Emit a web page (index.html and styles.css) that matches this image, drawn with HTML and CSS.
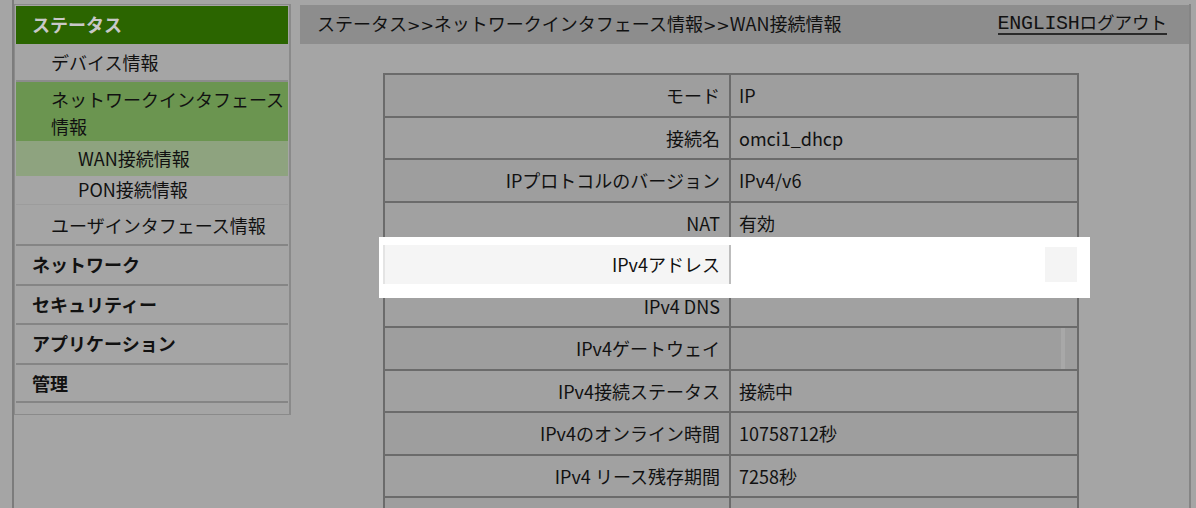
FILE: index.html
```html
<!DOCTYPE html>
<html lang="ja">
<head>
<meta charset="utf-8">
<title>WAN接続情報</title>
<link rel="stylesheet" href="styles.css">
</head>
<body>
<div class="frame">
  <aside class="sidebar">
    <div class="side-head">ステータス</div>
    <div class="side-item sub">デバイス情報</div>
    <div class="side-item sub active">ネットワークインタフェース情報</div>
    <div class="side-item subsub current">WAN接続情報</div>
    <div class="side-item subsub plain">PON接続情報</div>
    <div class="side-item sub sep">ユーザインタフェース情報</div>
    <div class="side-item top">ネットワーク</div>
    <div class="side-item top">セキュリティー</div>
    <div class="side-item top">アプリケーション</div>
    <div class="side-item top">管理</div>
    <div class="side-foot"></div>
  </aside>
  <main class="main">
    <div class="topbar">
      <div class="crumb">ステータス<span class="gt">&gt;&gt;</span>ネットワークインタフェース情報<span class="gt">&gt;&gt;</span>WAN接続情報</div>
      <div class="links"><a class="en">ENGLISH</a><a class="logout">ログアウト</a></div>
    </div>
    <div class="info">
      <div class="row"><div class="label">モード</div><div class="value">IP</div></div>
      <div class="row"><div class="label">接続名</div><div class="value">omci1_dhcp</div></div>
      <div class="row"><div class="label">IPプロトコルのバージョン</div><div class="value">IPv4/v6</div></div>
      <div class="row"><div class="label">NAT</div><div class="value">有効</div></div>
      <div class="row hl"><div class="label">IPv4アドレス</div><div class="value"><span class="tail"></span></div></div>
      <div class="row"><div class="label">IPv4 DNS</div><div class="value"></div></div>
      <div class="row"><div class="label">IPv4ゲートウェイ</div><div class="value"><span class="tail2"></span></div></div>
      <div class="row"><div class="label">IPv4接続ステータス</div><div class="value">接続中</div></div>
      <div class="row"><div class="label">IPv4のオンライン時間</div><div class="value">10758712秒</div></div>
      <div class="row"><div class="label">IPv4 リース残存期間</div><div class="value">7258秒</div></div>
      <div class="row last"><div class="label"></div><div class="value"></div></div>
    </div>
  </main>
</div>
</body>
</html>
```

FILE: styles.css
```css
html, body {
  margin: 0;
  padding: 0;
  background: #a5a5a5;
  height: 100%;
  overflow: hidden;
}
body {
  font-family: "Noto Sans CJK JP", "Noto Sans", sans-serif;
  color: #111;
  font-size: 18px;
}
.frame {
  display: flex;
  align-items: flex-start;
  margin-left: 12px;
  padding-top: 4px;
  border-left: 2px solid #7c7c7c;
  height: 504px;
  overflow: hidden;
}
.sidebar {
  width: 277px;
  box-sizing: border-box;
  border: 1px solid #8a8a8a;
  border-right-width: 2px;
  padding: 1px 1px 0 1px;
}
.side-head {
  height: 38px;
  line-height: 37px;
  background: #2b6500;
  color: #c8c8c8;
  font-weight: bold;
  padding-left: 16px;
}
.side-item {
  line-height: 27px;
  box-sizing: border-box;
}
.side-item.sub {
  padding: 5px 0 6px 35px;
  border-bottom: 2px solid #8c8c8c;
  height: 38px;
}
.side-item.active {
  background: #6b9550;
  height: 59px;
  padding-top: 4px;
  border-bottom: none;
}
.side-item.subsub {
  padding-left: 62px;
  height: 35px;
  padding-top: 4px;
}
.side-item.current {
  background: #8ea37f;
}
.side-item.plain {
  height: 29px;
  padding-top: 0;
  border-bottom: 1px solid #9c9c9c;
}
.side-item.sep {
  height: 41px;
  padding-top: 7px;
  border-bottom: 2px solid #858585;
}
.side-item.top {
  font-weight: bold;
  padding: 5px 0 0 16px;
  height: 40px;
  border-bottom: 2px solid #858585;
}
.side-item.top:nth-of-type(8) { height: 39px; }
.side-item.top:nth-of-type(10) { height: 38px; }
.side-foot {
  height: 11px;
}
.main {
  margin-left: 9px;
  flex: 1;
  margin-right: 5px;
  border-right: 2px solid #858585;
  height: 504px;
  overflow: hidden;
}
.topbar {
  height: 39px;
  margin-top: 1px;
  background: #8d8d8d;
  display: flex;
  align-items: center;
  justify-content: space-between;
  padding: 0 22px 0 17px;
}
.crumb {
  line-height: 24px;
  margin-top: -1px;
}
.crumb .gt {
  font-family: "DejaVu Sans", sans-serif;
  font-size: 16px;
}
.links {
  display: flex;
  align-items: baseline;
  border-bottom: 2px solid #2a2a2a;
  line-height: 18px;
  margin-top: -1px;
}
.links a {
  color: #111;
  text-decoration: none;
}
.links .en {
  font-family: "Liberation Mono", "DejaVu Sans Mono", monospace;
  font-size: 20px;
  letter-spacing: -0.3px;
}
.links .logout {
  font-size: 17.5px;
}
.info {
  margin: 29px 0 0 83px;
  width: 696px;
  box-sizing: border-box;
  border: 2px solid #6b6b6b;
  border-bottom: none;
}
.row {
  display: grid;
  grid-template-columns: 346px 1fr;
  height: 42.5px;
  box-sizing: border-box;
  border-bottom: 2px solid #6b6b6b;
  background: #9e9e9e;
}
.row:nth-child(even) {
  background: #a1a1a1;
}
.label {
  text-align: right;
  padding-right: 9px;
  border-right: 2px solid #6b6b6b;
  display: flex;
  align-items: center;
  justify-content: flex-end;
  line-height: 24px;
}
.value {
  padding-left: 8px;
  display: flex;
  align-items: center;
  line-height: 24px;
  position: relative;
}
.row.hl {
  position: relative;
  z-index: 1;
  background: #ffffff;
  border-bottom-color: #bdbdbd;
  margin-top: -2px;
  border-top: 2px solid #dcdcdc;
}
.row.hl::before {
  content: "";
  position: absolute;
  left: -6px;
  right: -13px;
  top: -8px;
  bottom: -14px;
  background: #ffffff;
  z-index: -1;
}
.row.hl .label {
  background: #f5f5f5;
  border-right-color: #bdbdbd;
  margin-left: -2px;
  padding-left: 2px;
  border-left: 2px solid #e4e4e4;
}
.row.hl .value {
  background: #ffffff;
}
.tail {
  position: absolute;
  right: 0;
  top: 2px;
  bottom: 2px;
  width: 32px;
  background: #f4f4f4;
}
.tail2 {
  position: absolute;
  right: 12px;
  top: 0;
  bottom: 0;
  width: 4px;
  background: #a8a8a8;
}
```
